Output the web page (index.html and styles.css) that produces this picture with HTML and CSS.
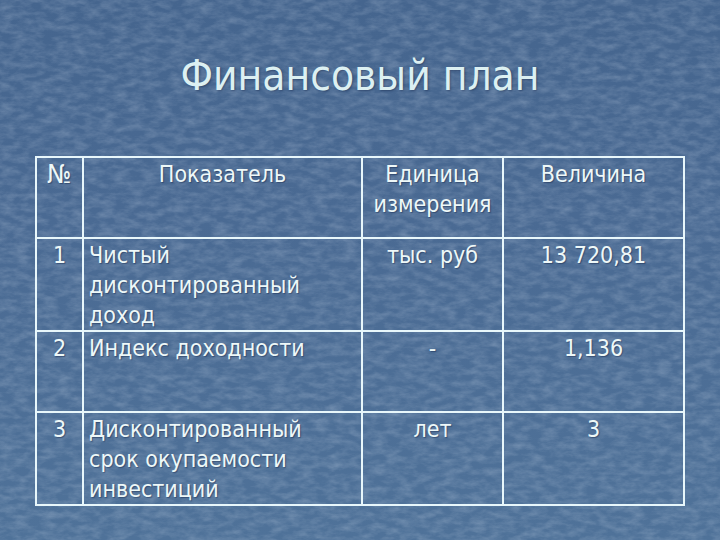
FILE: index.html
```html
<!DOCTYPE html>
<html lang="ru">
<head>
<meta charset="utf-8">
<title>Финансовый план</title>
<link rel="stylesheet" href="styles.css">
</head>
<body>
<main class="slide">
  <h1 class="title">Финансовый план</h1>
  <table class="plan">
    <colgroup>
      <col class="c-num"><col class="c-name"><col class="c-unit"><col class="c-val">
    </colgroup>
    <tr class="r-short">
      <td class="center"><span class="numsign">№</span></td>
      <td class="center">Показатель</td>
      <td class="center">Единица измерения</td>
      <td class="center">Величина</td>
    </tr>
    <tr class="r-tall">
      <td class="center">1</td>
      <td class="left">Чистый дисконтированный доход</td>
      <td class="center">тыс. руб</td>
      <td class="center">13 720,81</td>
    </tr>
    <tr class="r-short">
      <td class="center">2</td>
      <td class="left">Индекс доходности</td>
      <td class="center">-</td>
      <td class="center">1,136</td>
    </tr>
    <tr class="r-tall">
      <td class="center">3</td>
      <td class="left">Дисконтированный срок окупаемости инвестиций</td>
      <td class="center">лет</td>
      <td class="center">3</td>
    </tr>
  </table>
</main>
</body>
</html>
```
FILE: styles.css
```css
html, body {
  margin: 0;
  padding: 0;
}
body {
  width: 720px;
  height: 540px;
  overflow: hidden;
  font-family: "DejaVu Sans Condensed", "DejaVu Sans", sans-serif;
  color: #eef8f8;
}
.slide {
  width: 720px;
  height: 540px;
  box-sizing: border-box;
  padding-top: 51px;
  background-color: #4c6c93;
  background-image:
    url("data:image/svg+xml;utf8,<svg xmlns='http://www.w3.org/2000/svg' width='720' height='540'><filter id='n'><feTurbulence type='fractalNoise' baseFrequency='0.07 0.16' numOctaves='4' seed='3'/><feColorMatrix values='0 0 0 0 0.78  0 0 0 0 0.85  0 0 0 0 0.95  0 0 0 0.38 -0.13'/></filter><rect width='720' height='540' filter='url(%23n)'/></svg>"),
    linear-gradient(180deg, #45658e 0%, #4a6a93 40%, #4f7299 100%);
}
.title {
  margin: 0;
  text-align: center;
  font-weight: normal;
  font-size: 42px;
  line-height: 50px;
  color: #dcf0f2;
  text-shadow: 1px 1px 2px rgba(20, 35, 70, 0.45);
}
.plan {
  margin: 55px 0 0 35px;
  width: 648px;
  table-layout: fixed;
  border-collapse: collapse;
  font-size: 23px;
  line-height: 30px;
  text-shadow: 1px 1px 1px rgba(20, 35, 70, 0.45);
}
.c-num { width: 47px; }
.c-name { width: 279px; }
.c-unit { width: 141px; }
.c-val { width: 181px; }
.plan td {
  border: 2px solid #e8f7fb;
  vertical-align: top;
  padding: 1px 22px 0 5px;
}
.r-short { height: 81px; }
.r-tall { height: 93px; }
.plan td.center {
  text-align: center;
  padding-left: 2px;
  padding-right: 2px;
}
.plan td.left { text-align: left; }
.numsign {
  font-size: 26px;
}
```
